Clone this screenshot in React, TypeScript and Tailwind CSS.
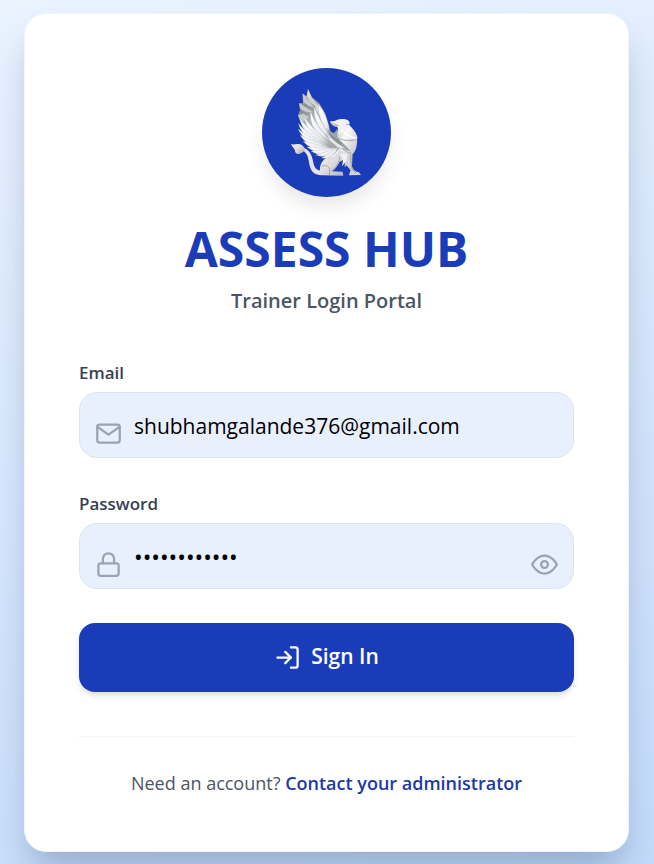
import { useState } from "react";
import type { ReactNode } from "react";

function Icon({ children }: { children: ReactNode }) {
  return (
    <svg viewBox="0 0 24 24" className="size-[27px]" fill="none" stroke="currentColor" strokeWidth="2" strokeLinecap="round" strokeLinejoin="round" aria-hidden="true">
      {children}
    </svg>
  );
}

function GriffinLogo() {
  return (
    <svg viewBox="37 39 387 387" className="size-full" aria-hidden="true">
      <defs>
        <linearGradient id="wing" x1="0" y1="0" x2="0.6" y2="1">
          <stop offset="0" stopColor="#f2f2f2" />
          <stop offset="0.25" stopColor="#858989" />
          <stop offset="0.5" stopColor="#b4b7b8" />
          <stop offset="1" stopColor="#a4a8a9" />
        </linearGradient>
        <linearGradient id="feather" x1="0" y1="0" x2="1" y2="1">
          <stop offset="0" stopColor="#ffffff" />
          <stop offset="0.7" stopColor="#ebecef" />
          <stop offset="1" stopColor="#b4b7ba" />
        </linearGradient>
        <linearGradient id="body" x1="0" y1="0" x2="1" y2="1">
          <stop offset="0" stopColor="#fafafa" />
          <stop offset="0.5" stopColor="#dddbde" />
          <stop offset="1" stopColor="#a9a7a9" />
        </linearGradient>
        <linearGradient id="chest" x1="0" y1="0" x2="1" y2="0.6">
          <stop offset="0" stopColor="#a9abac" />
          <stop offset="0.5" stopColor="#fafafa" />
          <stop offset="1" stopColor="#cfcfd2" />
        </linearGradient>
      </defs>
      <path d="M214 361C188 360 181 342 178 322C175 304 172 294 158 286L164 279C180 286 187 301 190 318C193 337 199 347 217 347Z" fill="#e4e3e6" />
      <path d="M124 267C133 270 138 266 147 267C157 268 165 275 165 286C159 294 151 299 141 296C134 292 138 287 134 283C129 276 127 272 124 267Z" fill="url(#body)" />
      <path d="M213 359C207 337 213 321 229 309L250 284L296 272L305 297C303 315 297 327 285 337L286 313L270 320C264 333 257 342 247 349L279 350L281 362L215 361Z" fill="url(#body)" />
      <path d="M216 335C225 328 237 332 240 343L239 359M245 348C259 338 268 325 270 305" fill="none" stroke="#8d8c90" strokeWidth="2" />
      <path d="M288 296L309 290L307 333C309 344 316 349 328 352L334 360L298 361L300 353L303 346L289 329Z" fill="#d3d2d6" />
      <path d="M303 300L305 340L319 354" fill="none" stroke="#88888c" strokeWidth="2" />
      <path d="M268 214L296 208C308 219 318 230 323 245L322 264C320 285 313 298 302 299C283 295 265 276 255 251Z" fill="url(#chest)" />
      <path d="M241 199C249 198 255 200 261 195C272 191 286 192 293 195C299 198 301 203 299 209L291 206C290 211 293 215 298 218L270 238C263 231 268 220 262 215C252 215 244 209 241 199Z" fill="#f1f1f3" />
      <path d="M241 199C249 207 259 206 268 210L263 216C252 215 244 209 241 199Z" fill="#c3b9c1" />
      <path d="M264 218C260 232 262 246 272 262L254 252L240 232C250 237 258 232 264 218Z" fill="#9da2a1" />
      <path d="M266 250C282 257 304 259 320 253M262 262C278 284 293 293 306 295" fill="none" stroke="#a2a3a6" strokeWidth="3" />
      <path d="M278 224C287 240 301 248 320 250" fill="none" stroke="#ffffff" strokeWidth="5" />
      <path d="M175 103L187 127L209 145L227 176L236 221L278 263L255 300L204 272L171 236L154 205L145 181L151 166L148 145L160 145L159 116L171 124Z" fill="url(#wing)" />
      <path d="M175 103L186 127L196 139L197 154L181 142L171 124Z" fill="#e8eaea" opacity="0.75" />
      <path d="M159 116L176 136L194 158L176 152L162 142ZM148 145L169 157L190 172L170 171L153 163ZM145 181L161 176L177 186L165 198L152 197Z" fill="#c8cbcb" />
      <path d="M196 139L211 158L228 190L236 222L220 196L198 164Z" fill="#d5d8d8" />
      <g fill="url(#feather)" stroke="#a6aaae" strokeWidth="0.8">
        <path d="M205 147Q236 181 242 238Q207 206 205 147Z" />
        <path d="M193 155Q210 197 245 249Q192 222 193 155Z" />
        <path d="M183 166Q191 207 246 260Q174 230 183 166Z" />
        <path d="M163 184Q178 213 243 266Q173 246 163 184Z" />
        <path d="M150 188Q171 221 241 270Q160 249 150 188Z" />
        <path d="M146 205Q169 235 240 274Q161 263 146 205Z" />
        <path d="M145 222Q177 248 243 278Q171 276 145 222Z" />
        <path d="M151 240Q191 258 246 280Q179 286 151 240Z" />
        <path d="M160 259Q199 268 250 282Q193 297 160 259Z" />
        <path d="M172 276Q211 276 254 281Q209 306 172 276Z" />
        <path d="M184 289Q220 282 257 279Q222 312 184 289Z" />
        <path d="M198 300Q230 291 260 278Q236 315 198 300Z" />
        <path d="M216 309Q239 297 265 276Q250 316 216 309Z" />
        <path d="M236 310Q255 298 273 277Q266 313 236 310Z" />
      </g>
      <path d="M232 220L250 242L280 264L303 289L276 281L248 257Z" fill="#858d8d" opacity="0.8" />
      <path d="M232 238L263 265L288 281L267 278L242 258Z" fill="#e6e8ea" />
      <path d="M272 297L280 316L277 334L290 318L294 297Z" fill="#f2f2f4" />
    </svg>
  );
}

const fieldClass =
  "block h-[66px] w-full rounded-[18px] border border-[#dce3ee] bg-[#e8f0fe] pt-[2px] pl-[54px] text-black outline-none focus:border-[#1a3cb8]";

export default function App() {
  const [email, setEmail] = useState("shubhamgalande376@gmail.com");
  const [password, setPassword] = useState("trainer-2024");
  const [visible, setVisible] = useState(false);

  return (
    <main className="flex min-h-screen items-center justify-center bg-linear-165 from-[#eaf3ff] to-[#c3dbfb] py-3 pr-[25px] pl-6 font-['Open_Sans','Noto_Sans',sans-serif]">
      <section className="w-full max-w-[605px] rounded-[22px] border border-[#f1f4f9] bg-white p-[54px] shadow-[0_24px_36px_-8px_rgba(30,50,90,0.3)]">
        <header className="flex flex-col items-center text-center">
          <div className="size-[129px] overflow-hidden rounded-full bg-[#1a3cb8] shadow-[0_12px_20px_-3px_rgba(0,0,0,0.1)]">
            <GriffinLogo />
          </div>
          <h1 className="mt-6 text-[48px] leading-[56px] font-bold text-[#1a3cb8]">ASSESS HUB</h1>
          <p className="mt-2 text-[20px] leading-8 font-semibold text-[#4b5563]">Trainer Login Portal</p>
        </header>

        <form className="mt-11 flex flex-col gap-[34px]" onSubmit={(e) => e.preventDefault()}>
          <div className="flex flex-col gap-[7px]">
            <label htmlFor="email" className="text-[17px] leading-6 font-semibold text-[#374151]">Email</label>
            <div className="relative">
              <input id="email" type="email" value={email} onChange={(e) => setEmail(e.target.value)} className={`${fieldClass} pr-4 text-[21px]`} />
              <span className="pointer-events-none absolute top-7 left-4 text-[#9ca3af]">
                <Icon>
                  <path d="M4 4h16c1.1 0 2 .9 2 2v12c0 1.1-.9 2-2 2H4c-1.1 0-2-.9-2-2V6c0-1.1.9-2 2-2z" />
                  <path d="m22 6-10 7L2 6" />
                </Icon>
              </span>
            </div>
          </div>

          <div className="flex flex-col gap-[7px]">
            <label htmlFor="password" className="text-[17px] leading-6 font-semibold text-[#374151]">Password</label>
            <div className="relative">
              <input id="password" type={visible ? "text" : "password"} value={password} onChange={(e) => setPassword(e.target.value)} className={`${fieldClass} pr-14 text-[23px]`} />
              <span className="pointer-events-none absolute top-7 left-4 text-[#9ca3af]">
                <Icon>
                  <rect x="3" y="11" width="18" height="11" rx="2" />
                  <path d="M7 11V7a5 5 0 0 1 10 0v4" />
                </Icon>
              </span>
              <button type="button" aria-label="Show password" onClick={() => setVisible(!visible)} className="absolute top-7 right-4 text-[#9ca3af]">
                <Icon>
                  <path d="M1 12s4-8 11-8 11 8 11 8-4 8-11 8-11-8-11-8z" />
                  <circle cx="12" cy="12" r="3" />
                </Icon>
              </button>
            </div>
          </div>

          <button type="submit" className="flex h-[69px] w-full items-center justify-center gap-[10px] rounded-[16px] bg-[#1a3cb8] text-[21px] font-semibold text-white shadow-[0_4px_6px_-1px_rgba(0,0,0,0.15)]">
            <Icon>
              <path d="M15 3h4a2 2 0 0 1 2 2v14a2 2 0 0 1-2 2h-4" />
              <path d="m10 17 5-5-5-5" />
              <path d="M15 12H3" />
            </Icon>
            Sign In
          </button>
        </form>

        <footer className="mt-11 border-t border-[#f3f4f6] pt-8 text-center text-[18px] leading-7 text-[#4b5563]">
          Need an account?{" "}
          <a href="#admin" className="font-semibold text-[#1e3a9f]">Contact your administrator</a>
        </footer>
      </section>
    </main>
  );
}
